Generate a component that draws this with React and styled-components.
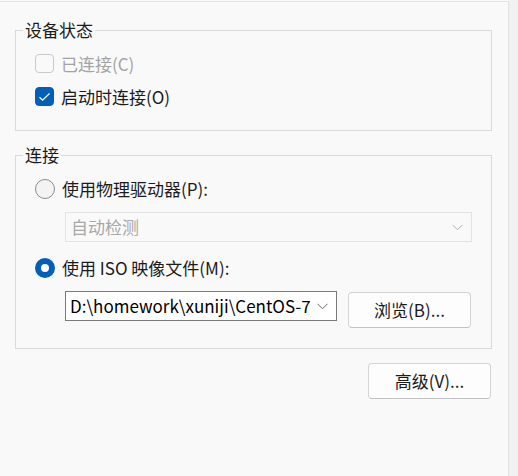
import React from 'react'
import styled, { createGlobalStyle } from 'styled-components'

const GlobalStyle = createGlobalStyle`
    html, body {
        margin: 0;
        padding: 0;
        background: #f9f9f9;
    }
    body {
        font-family: "Noto Sans CJK SC", "Noto Sans", sans-serif;
        font-size: 17px;
        color: #1b1b1b;
    }
`

const Page = styled.div`
    width: 518px;
    height: 476px;
    display: flex;
    overflow: hidden;
`

const Panel = styled.div`
    width: 477px;
    padding: 0 16px 0 15px;
    border-top: 1px solid #e3e3e3;
    border-right: 1px solid #e3e3e3;
    margin-top: 1px;
    display: flex;
    flex-direction: column;
`

const SideStrip = styled.div`
    flex: 1;
    background: #f1f1f1;
`

const Group = styled.fieldset`
    margin: ${props => props.$top}px 0 0 0;
    padding: 0 0 ${props => props.$bottom}px 19px;
    border: 1px solid #dadada;
    min-width: 0;
`

const Legend = styled.legend`
    margin-left: -12px;
    padding: 0 2px;
    line-height: 20px;
    color: #1b1b1b;
`

const Row = styled.label`
    display: flex;
    align-items: center;
    gap: 7px;
    height: 33px;
    margin-top: ${props => props.$top || 0}px;
    color: ${props => props.$disabled ? '#a3a3a3' : '#1b1b1b'};
    line-height: 20px;
    white-space: pre;
`

const Box = styled.span`
    width: 19px;
    height: 19px;
    box-sizing: border-box;
    border-radius: 4px;
    border: 1px solid ${props => props.$checked ? '#005fb8' : '#c9c9c9'};
    background: ${props => props.$checked ? '#005fb8' : 'transparent'};
    display: flex;
    align-items: center;
    justify-content: center;
    flex: none;
`

const Radio = styled.span`
    width: 20px;
    height: 20px;
    box-sizing: border-box;
    border-radius: 50%;
    flex: none;
    border: ${props => props.$checked ? '6px solid #005fb8' : '1px solid #8b8b8b'};
    background: ${props => props.$checked ? '#ffffff' : '#f3f3f3'};
`

const Select = styled.div`
    display: flex;
    align-items: center;
    justify-content: space-between;
    box-sizing: border-box;
    width: ${props => props.$width}px;
    height: 30px;
    margin-left: 30px;
    margin-top: ${props => props.$top || 0}px;
    padding: 0 8px 0 ${props => props.$disabled ? 5 : 4}px;
    border: 1px solid ${props => props.$disabled ? '#e3e3e3' : '#7a7a7a'};
    background: ${props => props.$disabled ? '#f9f9f9' : '#ffffff'};
    color: ${props => props.$disabled ? '#a8a8a8' : '#000000'};
    line-height: 20px;
    white-space: nowrap;
    flex: none;
`

const FileRow = styled.div`
    display: flex;
    align-items: flex-start;
    gap: 11px;
    margin-top: 7px;
`

const Button = styled.button`
    width: 123px;
    height: 36px;
    margin-top: ${props => props.$top || 0}px;
    align-self: ${props => props.$right ? 'flex-end' : 'auto'};
    margin-right: ${props => props.$right ? 1 : 0}px;
    box-sizing: border-box;
    border: 1px solid #d4d4d4;
    border-bottom-color: #c2c2c2;
    border-radius: 4px;
    background: #fdfdfd;
    font: inherit;
    color: #1b1b1b;
    line-height: 20px;
    padding: 0;
    flex: none;
`

const Chevron = ({ color }) => (
    <svg width="11" height="7" viewBox="0 0 11 7">
        <polyline points="0.5,0.8 5.5,5.8 10.5,0.8" fill="none" stroke={color} strokeWidth="1" />
    </svg>
)

const Check = () => (
    <svg width="13" height="10" viewBox="0 0 13 10">
        <polyline points="1.5,5.2 4.6,8.2 11.5,1.5" fill="none" stroke="#ffffff" strokeWidth="1.2" />
    </svg>
)

export default function App() {
    return (
        <Page>
            <GlobalStyle />
            <Panel>
                <Group $top={18} $bottom={17}>
                    <Legend>设备状态</Legend>
                    <Row $disabled $top={7}>
                        <Box />
                        已连接(C)
                    </Row>
                    <Row>
                        <Box $checked><Check /></Box>
                        启动时连接(O)
                    </Row>
                </Group>

                <Group $top={14} $bottom={20}>
                    <Legend>连接</Legend>
                    <Row $top={7}>
                        <Radio />
                        使用物理驱动器(P):
                    </Row>
                    <Select $disabled $width={407} $top={7}>
                        自动检测
                        <Chevron color="#b4b4b4" />
                    </Select>
                    <Row $top={9}>
                        <Radio $checked />
                        使用 ISO 映像文件(M):
                    </Row>
                    <FileRow>
                        <Select $width={272}>
                            D:\homework\xuniji\CentOS-7
                            <Chevron color="#6a6a6a" />
                        </Select>
                        <Button $top={1}>浏览(B)...</Button>
                    </FileRow>
                </Group>

                <Button $right $top={14}>高级(V)...</Button>
            </Panel>
            <SideStrip />
        </Page>
    )
}
